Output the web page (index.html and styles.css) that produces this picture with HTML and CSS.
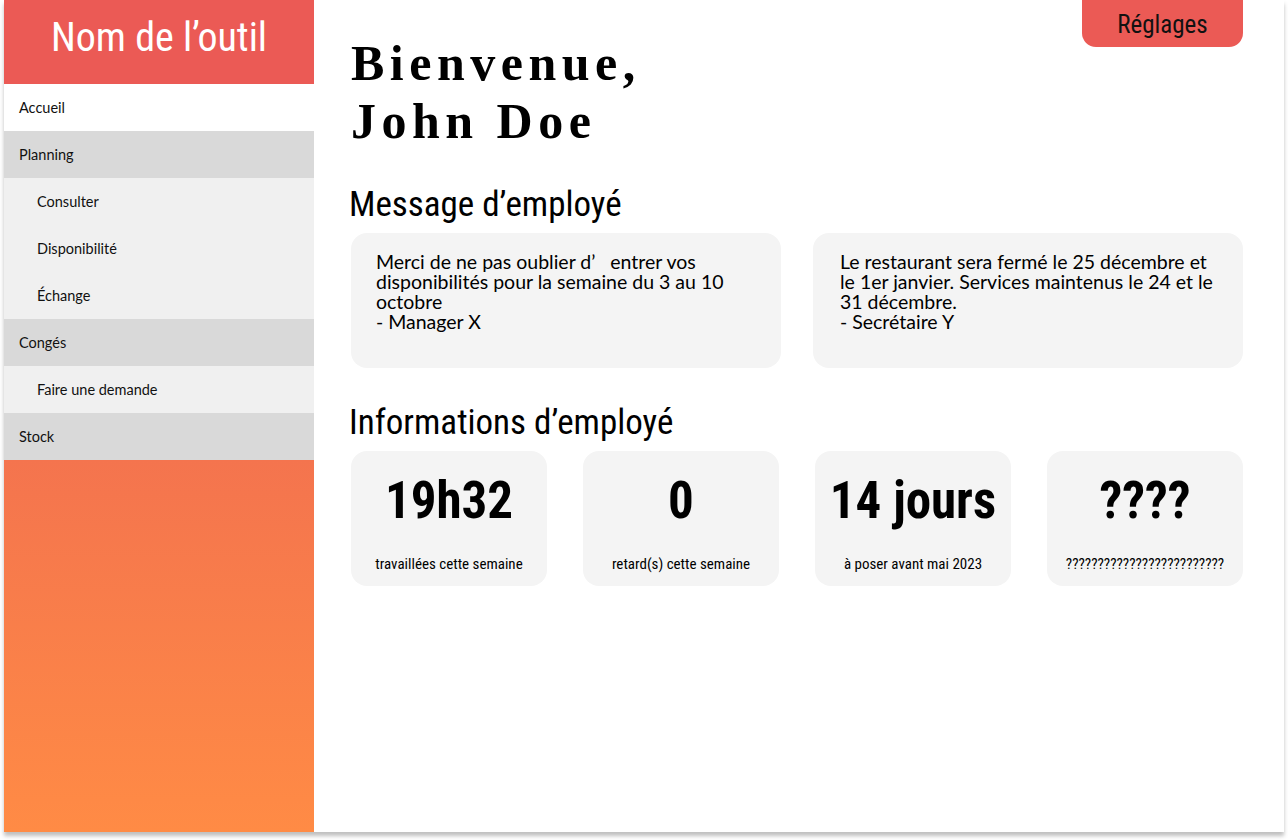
FILE: index.html
```html
<!DOCTYPE html>
<html lang="fr">
<head>
<meta charset="utf-8">
<title>Nom de l’outil</title>
<link rel="stylesheet" href="styles.css">
</head>
<body>
<div class="frame">
  <aside class="sidebar">
    <div class="brand">Nom de l’outil</div>
    <nav class="nav">
      <a class="nav-item active">Accueil</a>
      <a class="nav-item group">Planning</a>
      <a class="nav-item sub">Consulter</a>
      <a class="nav-item sub">Disponibilité</a>
      <a class="nav-item sub">Échange</a>
      <a class="nav-item group">Congés</a>
      <a class="nav-item sub">Faire une demande</a>
      <a class="nav-item group">Stock</a>
    </nav>
    <div class="sidebar-fill"></div>
  </aside>
  <main class="main">
    <header class="top">
      <h1 class="greeting">Bienvenue,<br>John Doe</h1>
      <button class="settings">Réglages</button>
    </header>
    <h2 class="section-title">Message d’employé</h2>
    <div class="messages">
      <div class="message">Merci de ne pas oublier d’&nbsp;&nbsp; entrer vos disponibilités pour la semaine du 3 au 10 octobre<br>- Manager X</div>
      <div class="message second">Le restaurant sera fermé le 25 décembre et le 1er janvier. Services maintenus le 24 et le 31 décembre.<br>- Secrétaire Y</div>
    </div>
    <h2 class="section-title">Informations d’employé</h2>
    <div class="stats">
      <div class="stat"><div class="stat-value">19h32</div><div class="stat-label">travaillées cette semaine</div></div>
      <div class="stat"><div class="stat-value">0</div><div class="stat-label">retard(s) cette semaine</div></div>
      <div class="stat"><div class="stat-value">14 jours</div><div class="stat-label">à poser avant mai 2023</div></div>
      <div class="stat"><div class="stat-value">????</div><div class="stat-label">?????????????????????????</div></div>
    </div>
  </main>
</div>
</body>
</html>
```
FILE: styles.css
```css
* { box-sizing: border-box; }
html, body { margin: 0; padding: 0; background: #ffffff; }
body { width: 1288px; height: 840px; overflow: hidden; }

.frame {
  display: flex;
  width: 1280px;
  height: 832px;
  margin-left: 4px;
  background: #ffffff;
  box-shadow: 0 4px 4px rgba(0, 0, 0, 0.25);
}

.sidebar {
  width: 310px;
  flex: none;
  display: flex;
  flex-direction: column;
}
.brand {
  height: 84px;
  background: #eb5a55;
  color: #ffffff;
  font-family: "Roboto Condensed", Roboto, sans-serif;
  font-weight: 400;
  font-size: 40px;
  line-height: 48px;
  display: flex;
  align-items: center;
  justify-content: center;
  padding-bottom: 8px;
}
.nav { display: flex; flex-direction: column; }
.nav-item {
  height: 47px;
  display: flex;
  align-items: center;
  padding-left: 15px;
  font-family: Lato, "Open Sans", sans-serif;
  font-size: 14.5px;
  color: #111111;
  background: #f0f0f0;
}
.nav-item.active { background: #ffffff; }
.nav-item.group { background: #d9d9d9; }
.nav-item.sub { padding-left: 33px; }
.sidebar-fill {
  flex: 1;
  background: linear-gradient(180deg, #f4744e 0%, #ff8b45 100%);
}

.main {
  flex: 1;
  padding: 0 41px 0 37px;
  font-family: "Roboto Condensed", Roboto, sans-serif;
}
.top {
  display: flex;
  justify-content: space-between;
  align-items: flex-start;
}
.greeting {
  margin: 34px 0 0 0;
  font-family: "Liberation Serif", "Times New Roman", serif;
  font-weight: bold;
  font-size: 50px;
  line-height: 58px;
  letter-spacing: 5.5px;
  color: #000000;
}
.settings {
  width: 161px;
  height: 47px;
  border: none;
  border-radius: 0 0 14px 14px;
  background: #eb5a55;
  color: #111111;
  font-family: "Roboto Condensed", Roboto, sans-serif;
  font-size: 25px;
  padding: 1px 0 0 0;
}
.section-title {
  margin: 35px 0 0 -2px;
  font-weight: 400;
  font-size: 35px;
  line-height: 40px;
  color: #000000;
}
.messages {
  display: grid;
  grid-template-columns: 1fr 1fr;
  gap: 32px;
  margin-top: 8px;
}
.message {
  height: 135px;
  background: #f4f4f4;
  border-radius: 16px;
  padding: 19px 20px 0 25px;
  font-family: Lato, "Open Sans", sans-serif;
  font-size: 19.5px;
  line-height: 20px;
  color: #000000;
}
.message.second { padding-left: 27px; }
.stats {
  display: grid;
  grid-template-columns: repeat(4, 1fr);
  gap: 36px;
  margin-top: 8px;
}
.stat {
  height: 135px;
  background: #f4f4f4;
  border-radius: 16px;
  display: flex;
  flex-direction: column;
  align-items: center;
  padding-top: 20px;
}
.stat-value {
  font-weight: 700;
  font-size: 51px;
  line-height: 60px;
  color: #000000;
  white-space: nowrap;
}
.stat-label {
  margin-top: 24px;
  font-size: 15px;
  line-height: 18px;
  color: #000000;
  white-space: nowrap;
}
```
